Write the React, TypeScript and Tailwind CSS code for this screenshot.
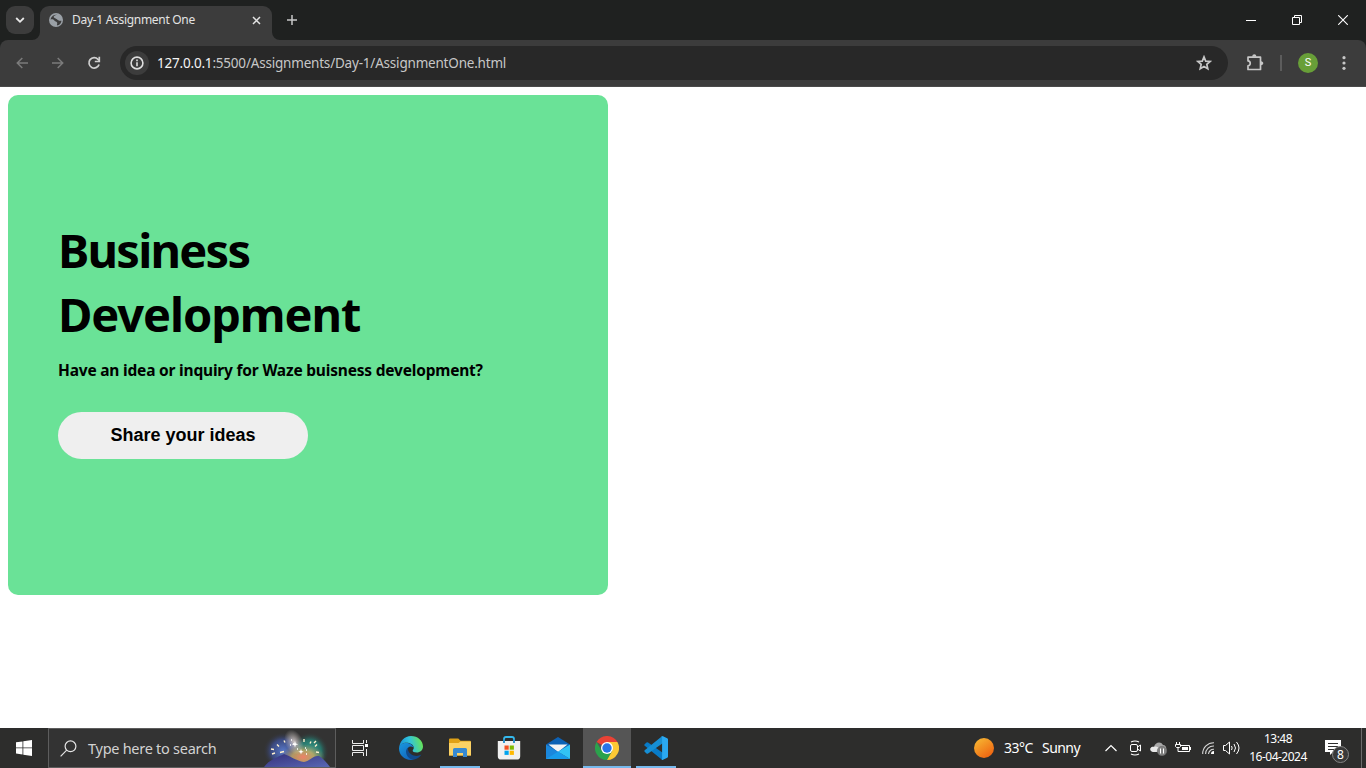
import React from "react";

type IconProps = { className?: string; w: number; h: number; children: React.ReactNode };

function Icon({ className = "", w, h, children }: IconProps) {
  return (
    <svg className={`shrink-0 ${className}`} width={w} height={h} viewBox={`0 0 ${w} ${h}`} fill="none">
      {children}
    </svg>
  );
}

function TabStrip() {
  return (
    <div className="flex h-10 shrink-0 items-start bg-[#1f2120] pl-1.5">
      <button className="mt-1.5 flex h-7 w-7 items-center justify-center rounded-[9px] bg-[#3c3c3c]">
        <Icon w={10} h={8}><path d="M1.2 2 5 5.8 8.8 2" stroke="#e8e8e8" strokeWidth="1.8" /></Icon>
      </button>
      <div className="relative ml-1.5 mt-1.5 flex h-[34px] w-[232px] items-center rounded-t-[9px] bg-[#3c3c3c] pl-2 pr-2.5 pb-1.5">
        <Icon className="absolute -left-2 bottom-0" w={8} h={8}><path d="M8 0v8H0a8 8 0 0 0 8-8" fill="#3c3c3c" /></Icon>
        <Icon className="absolute -right-2 bottom-0" w={8} h={8}><path d="M0 0v8h8a8 8 0 0 1-8-8" fill="#3c3c3c" /></Icon>
        <Icon w={16} h={16}>
          <circle cx="8" cy="8" r="7" fill="#9aa0a6" />
          <path d="M9.300 2.800c-1.500.3-3.600.7-3.600 2 0 1 1 1.300 2 1.700 1.500.5 1.600 1.500 3 2 1.300.4 2 .2 2.800.2a5.600 5.600 0 0 1-4.500 4.800c-.3-1.200.5-1.800.2-2.700-.5-1.200-2.200-.6-2.800-1.900-.4-.9-1-1.200-2-1.300H2.500A5.700 5.700 0 0 1 9.300 2.800" fill="#3c3c3c" />
          <path d="M6.500 3.600c1.700-.6 3.300 0 3.300 1 0 .8-1.600.7-1.600 1.500 0 1 2 .8 2.700 1.700.7.8 2 .4 2.500.3a5.500 5.500 0 0 0-3.900-5z" fill="#9aa0a6" />
          <path d="M2.600 7.600h2c1.600.2 1.800 1.900 3.200 2 1 .2 1.100 1 .8 1.800-.2.7-.8 1-.7 2.100a5.600 5.600 0 0 1-5.300-5.900" fill="#9aa0a6" />
        </Icon>
        <span className="ml-2 whitespace-nowrap text-[12px] leading-4 tracking-[-0.3px] text-[#e3e3e3]">Day-1 Assignment One</span>
        <Icon className="ml-auto mr-[1px]" w={9} h={9}><path d="m1 1 7 7M8 1 1 8" stroke="#e3e3e3" strokeWidth="1.5" /></Icon>
      </div>
      <Icon className="ml-[14px] mt-[14px]" w={12} h={12}><path d="M6 1v10M1 6h10" stroke="#c7c7c7" strokeWidth="1.5" /></Icon>
      <div className="ml-auto flex h-10">
        <div className="flex w-[46px] items-center justify-center"><Icon w={10} h={10}><path d="M0 5.5h10" stroke="#fff" /></Icon></div>
        <div className="flex w-[46px] items-center justify-center">
          <Icon w={10} h={10}><path d="M.5 2.5h7v7h-7zM2.5 2.5v-2h7v7h-2" stroke="#fff" /></Icon>
        </div>
        <div className="flex w-[46px] items-center justify-center"><Icon w={10} h={10}><path d="m.2.2 9.6 9.6M9.8.2.2 9.8" stroke="#fff" strokeWidth="1.1" /></Icon></div>
      </div>
    </div>
  );
}

function Toolbar() {
  return (
    <div className="shrink-0 bg-[#1f2120]">
      <div className="flex h-[47px] items-center rounded-t-lg border-b border-[#4a4a4a] bg-[#3c3c3c] pl-4">
        <Icon w={12} h={12}><path d="M12 6H1.4M6.3 1 1.3 6l5 5" stroke="#7b7b7b" strokeWidth="1.5" /></Icon>
        <Icon className="ml-6" w={12} h={12}><path d="M0 6h10.6M5.7 1l5 5-5 5" stroke="#7b7b7b" strokeWidth="1.5" /></Icon>
        <Icon className="ml-[23px]" w={14} h={14}>
          <path d="M12.1 8.5A5.2 5.2 0 1 1 11 3.3L12 4.5" stroke="#d0d0d0" strokeWidth="1.7" />
          <path d="M12.3.8v4.7H7.8" stroke="#d0d0d0" strokeWidth="1.7" />
        </Icon>
        <div className="ml-[19px] flex h-[34px] w-[1108px] items-center rounded-full bg-[#282828] pl-[5px]">
          <div className="flex h-6 w-6 items-center justify-center rounded-full bg-[#3c3c3c]">
            <Icon w={14} h={14}>
              <circle cx="7" cy="7" r="5.9" stroke="#dedede" strokeWidth="1.6" />
              <path d="M7 6.2v4M7 3.6v1.6" stroke="#dedede" strokeWidth="1.6" />
            </Icon>
          </div>
          <span className="ml-2 whitespace-nowrap text-[13.5px] leading-5 tracking-[-0.2px] text-[#c7c7c7]">
            <span className="text-[#f4f4f4]">127.0.0.1</span>:5500/Assignments/Day-1/AssignmentOne.html
          </span>
          <Icon className="ml-auto mr-4" w={16} h={16}>
            <path d="m8 1.9 1.7 4.2 4.5.4-3.4 2.9 1 4.4L8 11.5l-3.8 2.3 1-4.4-3.4-2.9 4.5-.4z" stroke="#c7c7c7" strokeWidth="1.7" />
          </Icon>
        </div>
        <Icon className="ml-[18px] mb-0.5" w={18} h={18}>
          <path d="M2 4.2h12.500v12.3H2v-3.7c3-.2 3-4.7 0-4.9z" stroke="#c7c7c7" strokeWidth="1.7" strokeLinejoin="round" />
          <path d="M6.200 3.8c0-3.300 4.200-3.300 4.200 0M15 8.300c3 .3 3 3.700 0 4" fill="#c7c7c7" />
        </Icon>
        <div className="ml-4 h-4 w-0.5 bg-[#5c5c5c]" />
        <div className="ml-4 flex h-5 w-5 items-center justify-center rounded-full bg-[#689f38] font-['Roboto',sans-serif] text-[11px] text-white">S</div>
        <Icon className="ml-6" w={4} h={16}>
          <circle cx="2" cy="2.700" r="1.600" fill="#c7c7c7" /><circle cx="2" cy="8" r="1.600" fill="#c7c7c7" /><circle cx="2" cy="13.300" r="1.600" fill="#c7c7c7" />
        </Icon>
      </div>
    </div>
  );
}

function Page() {
  return (
    <main className="min-h-0 flex-1 bg-white p-2">
      <section className="flex h-[500px] w-[600px] flex-col items-start rounded-[10px] bg-[#6ae297] pl-[50px] pt-[123px] text-black">
        <h1 className="whitespace-nowrap text-[47px] font-bold leading-[64px]">
          <span className="block tracking-[-1.75px]">Business</span>
          <span className="block tracking-[-1.1px]">Development</span>
        </h1>
        <p className="mt-[14px] whitespace-nowrap text-[15.5px] font-bold leading-[21px] tracking-[-0.2px]">Have an idea or inquiry for Waze buisness development?</p>
        <button className="mt-[31px] h-[47px] w-[250px] rounded-[25px] bg-[#efefef] font-['Liberation_Sans',Arial,sans-serif] text-[18px] font-bold">Share your ideas</button>
      </section>
    </main>
  );
}

function SearchArt() {
  return (
    <Icon className="ml-auto mr-1" w={68} h={38}>
      <defs>
        <radialGradient id="glowLeft"><stop stopColor="#5878c8" /><stop offset=".6" stopColor="#3c4c88" stopOpacity=".9" /><stop offset="1" stopColor="#333" stopOpacity="0" /></radialGradient>
        <radialGradient id="glowRight"><stop stopColor="#3ba692" /><stop offset=".6" stopColor="#267b70" stopOpacity=".9" /><stop offset="1" stopColor="#333" stopOpacity="0" /></radialGradient>
        <radialGradient id="glowMid"><stop stopColor="#f08068" /><stop offset=".5" stopColor="#ccaa60" stopOpacity=".8" /><stop offset="1" stopColor="#998866" stopOpacity="0" /></radialGradient>
        <radialGradient id="glowStar"><stop stopColor="#f3e6e0" stopOpacity=".8" /><stop offset="1" stopColor="#e5dfdf" stopOpacity="0" /></radialGradient>
        <linearGradient id="hill" x2="1" y2="1"><stop stopColor="#35307a" /><stop offset="1" stopColor="#5868b5" /></linearGradient>
      </defs>
      <ellipse cx="20" cy="22" rx="20" ry="19" fill="url(#glowLeft)" />
      <ellipse cx="47" cy="23" rx="19" ry="20" fill="url(#glowRight)" />
      <ellipse cx="40" cy="28" rx="22" ry="13" fill="url(#glowMid)" />
      <ellipse cx="31" cy="13" rx="9" ry="13" fill="url(#glowStar)" transform="rotate(-25 31 13)" />
      <path d="M1 38c5-7 12-9 20-13 7 2 12 7 20 8 6-1 9-7 15-6 5 3 7 6 11 11z" fill="url(#hill)" />
      <path d="m9 25 3-1m-4-4 3 .500m3-5 2 2m5-6 1 2m-5 10 4-1m27-10-1 2m7 1-2 2m4 6-3-.500m-2-9 2-2m-12 1v-3" stroke="#fff1ce" strokeWidth="1.4" />
      <path d="m32 12 .8 2.500 2.500.8-2.500.8-.8 2.500-.8-2.500-2.500-.8 2.500-.8zM38 20l.7 2 2 .7-2 .7-.7 2-.7-2-2-.7 2-.7z" fill="#fff" />
      <path d="M28 11h1m5 9h1m-5-5h1m12 6h1m-1 4h1m-17-9h1m14 3h1" stroke="#fff" strokeWidth="1.5" />
    </Icon>
  );
}

function EdgeIcon() {
  return (
    <Icon w={24} h={24}>
      <defs>
        <linearGradient id="edgeTop" x1="0" y1=".6" x2="1" y2=".4"><stop stopColor="#168ed8" /><stop offset=".48" stopColor="#31c3dc" /><stop offset="1" stopColor="#6ae650" /></linearGradient>
        <linearGradient id="edgeBody" x2=".7" y2="1"><stop stopColor="#1998df" /><stop offset="1" stopColor="#1264bb" /></linearGradient>
      </defs>
      <path d="M.2 12C.5 5.3 5.6 0 12 0c7 0 12 5 12 10.4 0 3.7-3 6-6.2 6-2.7 0-4.4-1-4.1-2 .3-.9 1.3-1.4 1-3.2C14.2 8.4 11 6.7 7.4 6.7 4 6.7 1.1 8.7.2 12" fill="url(#edgeTop)" />
      <path d="M0 12.5C.4 8.6 3.4 7.1 7 7.1c4 0 7 2 7.6 4.4C10.8 9 7.5 12 8 16c.5 4.2 3.6 7 7.4 7.5C7 25.5 0 20 0 12.5" fill="url(#edgeBody)" />
      <path d="M9.1 11.6c-2 1.3-2.5 4-1.7 6.4 1.2 3.8 4.3 6 8 5.5 3-.5 5.500-2.5 7-5-3 2-7.3 1.8-10.3-.2-2.7-1.8-3.5-4.4-3-6.7" fill="#114a8b" />
    </Icon>
  );
}

function FolderIcon() {
  return (
    <Icon w={22} h={20}>
      <path d="M0 1.8C0 .8.5.5 1.3.5h8l2.2 2.2h9c1 0 1.5.5 1.5 1.5v13.3H0z" fill="#dfa117" />
      <path d="M0 5h9.5l2-1.5H22v14H0z" fill="#fcd264" />
      <path d="M4 19v-7.500q0-1.500 1.500-1.500h11q1.500 0 1.500 1.500V19h-4v-4H8v4z" fill="#3789d0" />
    </Icon>
  );
}

function StoreIcon() {
  return (
    <Icon w={24} h={24}>
      <path d="M7 7V3q0-2 2-2h6q2 0 2 2v4" stroke="#35b9ed" strokeWidth="1.8" />
      <path d="M.8 5h22.4v15.2a3.4 3.4 0 0 1-3.4 3.4H4.2a3.4 3.4 0 0 1-3.4-3.4z" fill="#f0f0f0" />
      <path d="M7 7V3.5M17 7V3.5" stroke="#208dcb" strokeWidth="1.8" />
      <path d="M7.5 9.5h4.2v4.2H7.5z" fill="#f25022" /><path d="M12.7 9.5h4.2v4.2h-4.2z" fill="#7fba00" />
      <path d="M7.5 14.7h4.2v4.2H7.5z" fill="#00a4ef" /><path d="M12.7 14.7h4.2v4.2h-4.2z" fill="#ffb900" />
    </Icon>
  );
}

function MailIcon() {
  return (
    <Icon w={24} h={22}>
      <path d="M0 7.6 12 0l12 7.6L12 18z" fill="#0d62b5" />
      <path d="M2.5 7.5h19L12 15z" fill="#f4f4f4" />
      <path d="M0 7.5 24 22H0z" fill="#1b87dc" />
      <path d="M24 7.5 12 14.8 24 22z" fill="#32c3f4" /><path d="m0 22 12-7.2L24 22z" fill="#199bea" />
    </Icon>
  );
}

function ChromeIcon() {
  return (
    <Icon w={24} h={24}>
      <path d="M12 12 1.6 6a12 12 0 0 1 20.8 0z" fill="#e94235" />
      <path d="M1.6 6A12 12 0 0 0 12 24l5.2-9H6.8z" fill="#2ba24c" />
      <path d="M22.4 6H12l5.2 9L12 24A12 12 0 0 0 22.4 6" fill="#fcc934" />
      <circle cx="12" cy="12" r="6" fill="#fff" /><circle cx="12" cy="12" r="4.7" fill="#2874e8" />
    </Icon>
  );
}

function CodeIcon() {
  return (
    <Icon w={24} h={24}>
      <path d="m.7 8.3 1.8-1.7q.8-.5 1.6 0L24 20.6l-6 3.1L.7 9.8q-.8-.8 0-1.500" fill="#087bc7" />
      <path d="m.7 15.8 1.8 1.7q.8.5 1.6 0L24 3.4 18 .3.7 14.3q-.8.8 0 1.5" fill="#168fd5" />
      <path d="M17.2 23.6c.6.6 1.2.4 1.8.1l4.2-2q.8-.4.8-1.2v-17q0-.8-.8-1.2L19 .3c-.7-.3-1.3-.2-1.800.4.5-.3.9 0 .9.6v21.4c0 .6-.4 1.1-.9.9" fill="#2ba9f1" />
    </Icon>
  );
}

function Taskbar() {
  const apps = [
    { icon: <EdgeIcon />, bar: false, active: false },
    { icon: <FolderIcon />, bar: true, active: false },
    { icon: <StoreIcon />, bar: false, active: false },
    { icon: <MailIcon />, bar: false, active: false },
    { icon: <ChromeIcon />, bar: true, active: true },
    { icon: <CodeIcon />, bar: true, active: false },
  ];
  return (
    <footer className="flex h-10 shrink-0 items-center bg-[#2d2d2c] text-white">
      <div className="flex w-12 justify-center">
        <Icon w={16} h={16}><path d="m0 2.3 6.5-.9v6.1H0zm7.3-1L16 0v7.5H7.3zM0 8.3h6.5v6.2L0 13.6zm7.3 0H16V16l-8.7-1.3z" fill="#fff" /></Icon>
      </div>
      <div className="flex h-10 w-72 items-center border border-[#5d5d5d] bg-[#333333] pl-[11px]">
        <Icon w={17} h={17}><circle cx="10.5" cy="6.3" r="5.4" stroke="#e4e4e4" strokeWidth="1.2" /><path d="M6.7 10.2.6 16.3" stroke="#e4e4e4" strokeWidth="1.2" /></Icon>
        <span className="ml-[11px] whitespace-nowrap text-[14.5px] leading-5 tracking-[-0.27px] text-[#d2d2d2]">Type here to search</span>
        <SearchArt />
      </div>
      <div className="flex w-[51px] pl-[15px]">
        <Icon w={18} h={16}>
          <path d="M1.5 0v3.5h11V0M1.5 16v-3.500h11V16M1.500 5.500h11v5h-11zM15.500 0v3M15.500 9v7" stroke="#ececec" />
          <path d="M14 4h3v3h-3z" fill="#fff" />
        </Icon>
      </div>
      <div className="flex gap-px">
        {apps.map((app, i) => (
          <div key={i} className={`relative flex h-10 w-12 items-center justify-center ${app.active ? "bg-[#555555]" : ""}`}>
            {app.icon}
            {app.bar && <span className={`absolute bottom-0 h-0.5 bg-[#76b9ed] ${app.active ? "inset-x-0" : "inset-x-1"}`} />}
          </div>
        ))}
      </div>
      <div className="ml-auto flex h-10 items-center">
        <Icon w={20} h={20}>
          <defs><linearGradient id="sun" x2=".7" y2="1"><stop stopColor="#f7be35" /><stop offset="1" stopColor="#ef6411" /></linearGradient></defs>
          <circle cx="10" cy="10" r="10" fill="url(#sun)" />
        </Icon>
        <span className="ml-2.5 w-[29px] whitespace-nowrap text-[14px] leading-5 tracking-[-0.5px]">33°C</span>
        <span className="ml-[9px] w-[38px] whitespace-nowrap text-[14px] leading-5 tracking-[-0.55px]">Sunny</span>
        <Icon className="ml-[25px]" w={12} h={8}><path d="m.5 7 5.5-5.5L11.500 7" stroke="#fff" strokeWidth="1.2" /></Icon>
        <Icon className="ml-3" w={13} h={16}>
          <rect x="1.500" y="4.500" width="7" height="7" rx="1.500" stroke="#fff" /><path d="m8.500 7 3-2v6l-3-2" stroke="#fff" />
          <path d="M2 2Q6 0 10 2M2 14q4 2 8 0" stroke="#fff" strokeWidth="1.1" />
        </Icon>
        <Icon className="ml-2" w={18} h={15}>
          <path d="M1 10C-1 7 2 5 4 6c1-5 7-6 9-2 3 0 4 3 3 7H3z" fill="#a7a7a7" />
          <path d="M1 10C-1 7 2 5 4 6c2-1 4 0 6 2l-3 3H3z" fill="#e8e8e8" />
          <circle cx="12" cy="10" r="4.700" fill="#808080" stroke="#696969" strokeWidth=".6" />
          <path d="M10.500 7.500v5m3-5v5" stroke="#fff" />
        </Icon>
        <Icon className="ml-[7px]" w={17} h={12}>
          <path d="M6 3.500h8.500v6h-9M15.500 5v3" stroke="#fff" /><path d="M7 5h6v3H7z" fill="#fff" />
          <path d="M1.500 0v2m3-2v2M.5 2.500h5v2l-1 1h-3l-1-1zM3 6v3.500h3" stroke="#fff" />
        </Icon>
        <Icon className="ml-2.5" w={13} h={13}>
          <path d="M.7 12A11 11 0 0 1 12 .7M3.600 12A8 8 0 0 1 12 4M6.500 12A5 5 0 0 1 12 7.300" stroke="#d6d6d6" strokeWidth="1.1" />
          <path d="M9 12c0-2 1-3 3-3v3z" fill="#fff" />
        </Icon>
        <Icon className="ml-2" w={17} h={14}>
          <path d="M.500 4.500h2l4-3.500v12l-4-3.500h-2zM8.500 5q1.300 2 0 4M11 3q3 4 0 8M13.500 1q5 6 0 12" stroke="#fff" />
        </Icon>
        <div className="ml-2 w-[60px] text-center text-[12px] leading-[18px] tracking-[-0.5px]"><div>13:48</div><div className="whitespace-nowrap">16-04-2024</div></div>
        <div className="relative ml-[17px] h-10 w-9">
          <Icon className="mt-3" w={17} h={17}>
            <path d="M0 0h16v12H8l-3 3v-3H0z" fill="#fff" /><path d="M3 3.500h10M3 6.500h10M3 9.500h6" stroke="#303030" />
          </Icon>
          <span className="absolute left-[7px] top-[18px] flex h-[17px] w-[17px] items-center justify-center rounded-full border border-[#858585] bg-[#393939] text-[12px] leading-4">8</span>
        </div>
        <div className="h-10 w-[5px] border-l border-[#6b6b6b]" />
      </div>
    </footer>
  );
}

export default function App() {
  return (
    <div className="flex h-[768px] w-[1366px] flex-col overflow-hidden bg-white font-['Noto_Sans','Open_Sans',sans-serif]">
      <TabStrip />
      <Toolbar />
      <Page />
      <Taskbar />
    </div>
  );
}
